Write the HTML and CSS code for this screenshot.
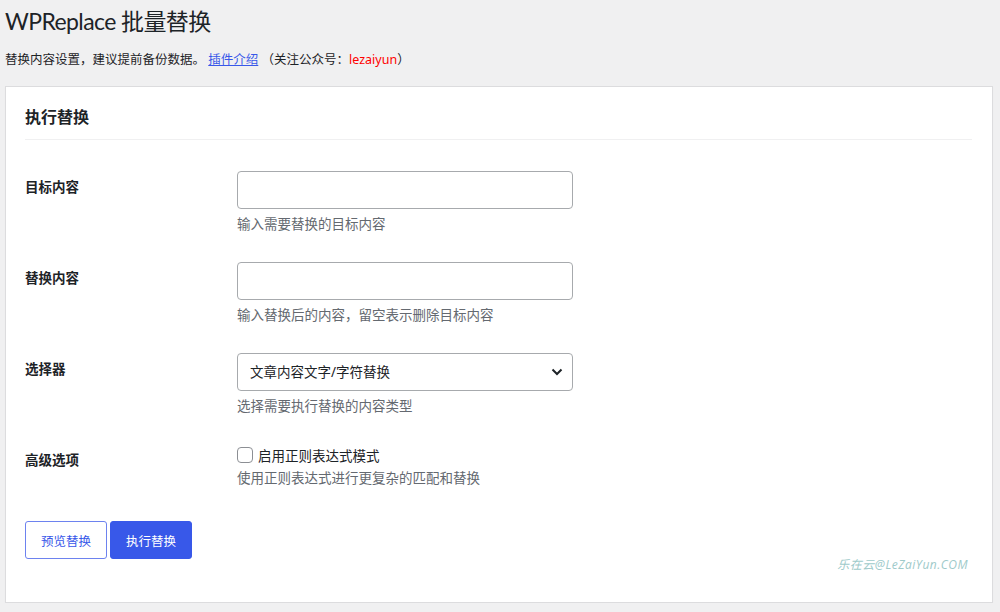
FILE: index.html
```html
<!DOCTYPE html>
<html lang="zh-CN">
<head>
  <meta charset="UTF-8" />
  <title>WPReplace 批量替换</title>
  <link rel="stylesheet" href="styles.css">
</head>
<body>
  <div class="wrap">
    <h1>WPReplace 批量替换</h1>
    <p class="intro">替换内容设置，建议提前备份数据。 <a href="#">插件介绍</a> （关注公众号：<span class="wechat">lezaiyun</span>）</p>

    <!-- Main card -->
    <div class="card">
      <h2>执行替换</h2>

      <div class="form-table">
        <div class="form-row">
          <label class="form-label" for="search">目标内容</label>
          <div class="form-field">
            <input type="text" id="search" class="text-input">
            <p class="description">输入需要替换的目标内容</p>
          </div>
        </div>

        <div class="form-row">
          <label class="form-label" for="replace">替换内容</label>
          <div class="form-field">
            <input type="text" id="replace" class="text-input">
            <p class="description">输入替换后的内容，留空表示删除目标内容</p>
          </div>
        </div>

        <div class="form-row">
          <label class="form-label" for="selector">选择器</label>
          <div class="form-field">
            <div class="select-wrap">
              <select id="selector" class="select-input">
                <option>文章内容文字/字符替换</option>
              </select>
              <svg class="chevron" width="12" height="8" viewBox="0 0 12 8" aria-hidden="true">
                <path d="M1.5 1.5 L6 6 L10.5 1.5" fill="none" stroke="#1d2327" stroke-width="2"/>
              </svg>
            </div>
            <p class="description">选择需要执行替换的内容类型</p>
          </div>
        </div>

        <div class="form-row">
          <span class="form-label">高级选项</span>
          <div class="form-field">
            <label class="check-line">
              <input type="checkbox" class="checkbox">
              启用正则表达式模式
            </label>
            <p class="description tight">使用正则表达式进行更复杂的匹配和替换</p>
          </div>
        </div>
      </div>

      <div class="submit">
        <button type="button" class="btn btn-secondary">预览替换</button>
        <button type="button" class="btn btn-primary">执行替换</button>
      </div>

      <div class="watermark">乐在云@LeZaiYun.COM</div>
    </div>
  </div>
</body>
</html>
```

FILE: styles.css
```css
/* Base */
* {
  box-sizing: border-box;
}
body {
  margin: 0;
  background: #f0f0f1;
  color: #1d2327;
  font-family: "Noto Sans", "Noto Sans CJK SC", sans-serif;
  font-size: 13.5px;
}
.wrap {
  padding: 6px 7px 0 5px;
}
h1 {
  margin: 0;
  font-family: Lato, "Noto Sans CJK SC", sans-serif;
  font-size: 23px;
  font-weight: 400;
  line-height: 30px;
  letter-spacing: -0.6px;
}
.intro {
  margin: 14px 0 17px;
  font-size: 12.5px;
  line-height: 19px;
}
.intro a {
  color: #3858e9;
}
.intro .wechat {
  color: #f00;
}
/* Card */
.card {
  position: relative;
  background: #fff;
  border: 1px solid #dcdcde;
  box-shadow: 0 1px 1px rgba(0, 0, 0, 0.04);
  padding: 20px 20px 20px 19px;
}
.card h2 {
  margin: 0;
  padding-bottom: 11px;
  border-bottom: 1px solid #f0f0f1;
  font-size: 16px;
  font-weight: 700;
  line-height: 21px;
}
/* Form rows */
.form-table {
  margin-top: 17px;
}
.form-row {
  display: grid;
  grid-template-columns: 212px 1fr;
  padding: 14px 0;
}
.form-label {
  padding-top: 6px;
  font-weight: 700;
  line-height: 20px;
}
.text-input,
.select-input {
  display: block;
  width: 336px;
  height: 38px;
  margin: 0;
  border: 1px solid #a7aaad;
  border-radius: 4px;
  background: #fff;
  font: inherit;
  color: #1d2327;
}
.text-input {
  padding: 0 12px;
}
.select-wrap {
  position: relative;
  width: 336px;
}
.select-input {
  appearance: none;
  -webkit-appearance: none;
  padding: 0 30px 0 12px;
}
.chevron {
  position: absolute;
  right: 10px;
  top: 15px;
  pointer-events: none;
}
.description {
  margin: 5px 0 0;
  color: #646970;
  line-height: 20px;
}
.description.tight {
  margin-top: 1px;
}
.check-line {
  display: flex;
  align-items: center;
  gap: 5px;
  height: 24px;
  margin-top: -1px;
  color: #1d2327;
}
.checkbox {
  appearance: none;
  -webkit-appearance: none;
  width: 16px;
  height: 16px;
  margin: 0;
  border: 1px solid #8c8f94;
  border-radius: 4px;
  background: #fff;
}
/* Buttons */
.submit {
  display: flex;
  gap: 3px;
  margin-top: 19px;
  margin-bottom: 23px;
}
.btn {
  height: 38px;
  width: 82px;
  padding: 0;
  border-radius: 3px;
  font: inherit;
  font-size: 12.5px;
  cursor: pointer;
}
.btn-secondary {
  background: #fff;
  border: 1px solid #6d82ef;
  color: #3858e9;
}
.btn-primary {
  background: #3858e9;
  border: 1px solid #3858e9;
  color: #fff;
}
.watermark {
  position: absolute;
  right: 24px;
  bottom: 29px;
  color: #9ecaca;
  font-family: "Open Sans", "Noto Sans CJK SC", sans-serif;
  font-style: italic;
  font-size: 12px;
  line-height: 16px;
  letter-spacing: 0.5px;
}
```
